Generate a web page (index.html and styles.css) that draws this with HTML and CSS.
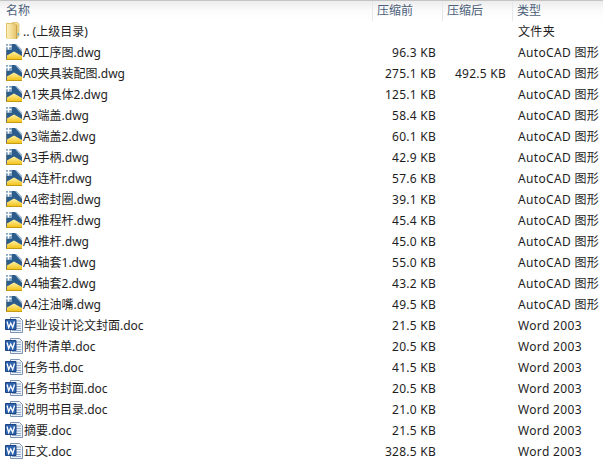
FILE: index.html
```html
<!DOCTYPE html>
<html>
<head>
    <meta charset="utf-8"/>
    <link rel="stylesheet" href="styles.css">
</head>
<body>
<svg class="defs" width="0" height="0">
    <defs>
        <linearGradient id="fold" x1="0" y1="0" x2="1" y2="0">
            <stop offset="0" stop-color="#fdf0bd"/>
            <stop offset="1" stop-color="#e6c66e"/>
        </linearGradient>
        <linearGradient id="cad" x1="0" y1="0" x2="0" y2="1">
            <stop offset="0" stop-color="#fff3a8"/>
            <stop offset="1" stop-color="#f2bd0a"/>
        </linearGradient>
        <symbol id="i-folder" viewBox="0 0 18 18">
            <path d="M1 1h9l2 1v15H3l-2-1z" fill="#e4c268"/>
            <path d="M7 .5h5.500l1.500 1.500v12l-2 2.500V3z" fill="#f5dc94" stroke="#d2ae56" stroke-width=".6"/>
            <path d="M2 2h5l4 1v14H4l-2-1z" fill="url(#fold)"/>
            <path d="M11.500 3v14" stroke="#c79f45" stroke-width=".8"/>
            <path d="M12.500 11h1.500v2.500h-1.500z" fill="#5fb0d8"/>
        </symbol>
        <symbol id="i-cad" viewBox="0 0 18 18">
            <path d="M1 1h10l6 6v6H1z" fill="#2b5c8c"/>
            <path d="M10 1h1.500L17 6.500V9z" fill="#a9c2d8"/>
            <path d="M1 1h6v6H1z" fill="#7f9fbe"/>
            <path d="M3.500 1v5.500M1 3.500h5.500" stroke="#fff" stroke-width="1.300"/>
            <path d="M1 13l8-4.500 8 4.500v4H1z" fill="url(#cad)"/>
            <path d="M1 16.500h16" stroke="#c49c14"/>
            <path d="M1.500 7v9" stroke="#5f7380" stroke-width="1"/>
        </symbol>
        <symbol id="i-doc" viewBox="0 0 18 18">
            <path d="M5.500 1.500h9l3 3v12h-12z" fill="#eef3fa" stroke="#7d93b2"/>
            <path d="M11 5h5M11 7.500h5M11 10h5M11 12.500h5M7 14.500h9" stroke="#8ea8ca"/>
            <path d="M.5 3.500h10.500v10H.5z" fill="#2c62ae" stroke="#1d4583"/>
            <path d="M2 5.500l1.700 6 2-4.500 2 4.500L9.500 5.500" fill="none" stroke="#fff" stroke-width="1.300"/>
        </symbol>
    </defs>
</svg>

<div class="list">
    <div class="header">
        <div class="col name">名称</div>
        <div class="col">压缩前</div>
        <div class="col">压缩后</div>
        <div class="col">类型</div>
    </div>

    <div class="row">
        <div class="name"><svg class="icon"><use href="#i-folder"/></svg>.. (上级目录)</div>
        <div class="size"></div><div class="size"></div><div class="type">文件夹</div>
    </div>
    <div class="row">
        <div class="name"><svg class="icon"><use href="#i-cad"/></svg>A0工序图.dwg</div>
        <div class="size">96.3 KB</div><div class="size"></div><div class="type">AutoCAD 图形</div>
    </div>
    <div class="row">
        <div class="name"><svg class="icon"><use href="#i-cad"/></svg>A0夹具装配图.dwg</div>
        <div class="size">275.1 KB</div><div class="size">492.5 KB</div><div class="type">AutoCAD 图形</div>
    </div>
    <div class="row">
        <div class="name"><svg class="icon"><use href="#i-cad"/></svg>A1夹具体2.dwg</div>
        <div class="size">125.1 KB</div><div class="size"></div><div class="type">AutoCAD 图形</div>
    </div>
    <div class="row">
        <div class="name"><svg class="icon"><use href="#i-cad"/></svg>A3端盖.dwg</div>
        <div class="size">58.4 KB</div><div class="size"></div><div class="type">AutoCAD 图形</div>
    </div>
    <div class="row">
        <div class="name"><svg class="icon"><use href="#i-cad"/></svg>A3端盖2.dwg</div>
        <div class="size">60.1 KB</div><div class="size"></div><div class="type">AutoCAD 图形</div>
    </div>
    <div class="row">
        <div class="name"><svg class="icon"><use href="#i-cad"/></svg>A3手柄.dwg</div>
        <div class="size">42.9 KB</div><div class="size"></div><div class="type">AutoCAD 图形</div>
    </div>
    <div class="row">
        <div class="name"><svg class="icon"><use href="#i-cad"/></svg>A4连杆r.dwg</div>
        <div class="size">57.6 KB</div><div class="size"></div><div class="type">AutoCAD 图形</div>
    </div>
    <div class="row">
        <div class="name"><svg class="icon"><use href="#i-cad"/></svg>A4密封圈.dwg</div>
        <div class="size">39.1 KB</div><div class="size"></div><div class="type">AutoCAD 图形</div>
    </div>
    <div class="row">
        <div class="name"><svg class="icon"><use href="#i-cad"/></svg>A4推程杆.dwg</div>
        <div class="size">45.4 KB</div><div class="size"></div><div class="type">AutoCAD 图形</div>
    </div>
    <div class="row">
        <div class="name"><svg class="icon"><use href="#i-cad"/></svg>A4推杆.dwg</div>
        <div class="size">45.0 KB</div><div class="size"></div><div class="type">AutoCAD 图形</div>
    </div>
    <div class="row">
        <div class="name"><svg class="icon"><use href="#i-cad"/></svg>A4轴套1.dwg</div>
        <div class="size">55.0 KB</div><div class="size"></div><div class="type">AutoCAD 图形</div>
    </div>
    <div class="row">
        <div class="name"><svg class="icon"><use href="#i-cad"/></svg>A4轴套2.dwg</div>
        <div class="size">43.2 KB</div><div class="size"></div><div class="type">AutoCAD 图形</div>
    </div>
    <div class="row">
        <div class="name"><svg class="icon"><use href="#i-cad"/></svg>A4注油嘴.dwg</div>
        <div class="size">49.5 KB</div><div class="size"></div><div class="type">AutoCAD 图形</div>
    </div>
    <div class="row">
        <div class="name"><svg class="icon doc"><use href="#i-doc"/></svg>毕业设计论文封面.doc</div>
        <div class="size">21.5 KB</div><div class="size"></div><div class="type">Word 2003</div>
    </div>
    <div class="row">
        <div class="name"><svg class="icon doc"><use href="#i-doc"/></svg>附件清单.doc</div>
        <div class="size">20.5 KB</div><div class="size"></div><div class="type">Word 2003</div>
    </div>
    <div class="row">
        <div class="name"><svg class="icon doc"><use href="#i-doc"/></svg>任务书.doc</div>
        <div class="size">41.5 KB</div><div class="size"></div><div class="type">Word 2003</div>
    </div>
    <div class="row">
        <div class="name"><svg class="icon doc"><use href="#i-doc"/></svg>任务书封面.doc</div>
        <div class="size">20.5 KB</div><div class="size"></div><div class="type">Word 2003</div>
    </div>
    <div class="row">
        <div class="name"><svg class="icon doc"><use href="#i-doc"/></svg>说明书目录.doc</div>
        <div class="size">21.0 KB</div><div class="size"></div><div class="type">Word 2003</div>
    </div>
    <div class="row">
        <div class="name"><svg class="icon doc"><use href="#i-doc"/></svg>摘要.doc</div>
        <div class="size">21.5 KB</div><div class="size"></div><div class="type">Word 2003</div>
    </div>
    <div class="row">
        <div class="name"><svg class="icon doc"><use href="#i-doc"/></svg>正文.doc</div>
        <div class="size">328.5 KB</div><div class="size"></div><div class="type">Word 2003</div>
    </div>
</div>
</body>
</html>
```

FILE: styles.css
```css
html, body {
    margin: 0;
    height: 100%;
    overflow: hidden;
    background: #fff;
}

.defs {
    display: block;
    height: 0;
}

.list {
    width: 603px;
    font-family: "Noto Sans", "Noto Sans CJK SC", sans-serif;
    font-size: 12px;
    color: #1e1e1e;
}

.header {
    display: grid;
    grid-template-columns: 372px 70px 70px 1fr;
    height: 20px;
    color: #4c607a;
    line-height: 20px;
    border-top: 1px solid #c4c4c4;
    background: linear-gradient(#ececec, #fbfbfb 50%, #fff);
}

.header .col {
    padding-left: 4px;
    border-left: 1px solid #e6e9ec;
}

.header .col.name {
    padding-left: 6px;
    border-left: 0;
}

.row {
    display: grid;
    grid-template-columns: 372px 64px 70px 1fr;
    height: 21px;
    line-height: 21px;
    white-space: nowrap;
}

.row .name {
    display: flex;
    align-items: flex-start;
    padding-left: 5px;
}

.row .size {
    text-align: right;
    letter-spacing: 0.25px;
}

.row .type {
    padding-left: 12px;
    letter-spacing: 0.33px;
}

.icon {
    width: 18px;
    height: 18px;
    flex: none;
    margin-top: 1px;
}

.icon.doc {
    margin-right: 1px;
}
```
